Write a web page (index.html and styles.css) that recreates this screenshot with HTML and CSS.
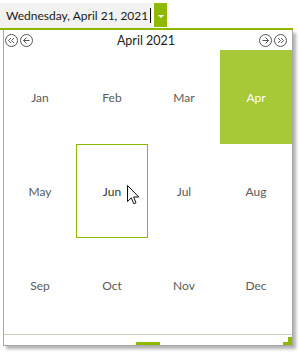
FILE: index.html
```html
<!DOCTYPE html>
<html lang="en">
<head>
  <meta charset="UTF-8">
  <title>Date Picker</title>
  <link rel="stylesheet" href="styles.css">
</head>
<body>

  <div class="picker">
    <div class="field">
      <span class="value">Wednesday, April 21, 2021</span>
      <span class="caret"></span>
    </div>
    <div class="drop"><span class="arrow"></span></div>
  </div>
  <div class="topline"></div>

  <div class="popup">
    <div class="header">
      <div class="nav">
        <svg width="13" height="13" viewBox="0 0 13 13">
          <circle cx="6.5" cy="6.5" r="6" fill="none" stroke="#555" />
          <path d="M6 4 L3.5 6.5 L6 9 M9 4 L6.5 6.5 L9 9" fill="none" stroke="#555" />
        </svg>
        <svg width="13" height="13" viewBox="0 0 13 13">
          <circle cx="6.5" cy="6.5" r="6" fill="none" stroke="#555" />
          <path d="M6.5 3.5 L3.5 6.5 L6.5 9.5 M3.5 6.5 L9.5 6.5" fill="none" stroke="#555" />
        </svg>
      </div>
      <div class="title">April 2021</div>
      <div class="nav">
        <svg width="13" height="13" viewBox="0 0 13 13">
          <circle cx="6.5" cy="6.5" r="6" fill="none" stroke="#555" />
          <path d="M6.5 3.5 L9.5 6.5 L6.5 9.5 M3.5 6.5 L9.5 6.5" fill="none" stroke="#555" />
        </svg>
        <svg width="13" height="13" viewBox="0 0 13 13">
          <circle cx="6.5" cy="6.5" r="6" fill="none" stroke="#555" />
          <path d="M4 4 L6.5 6.5 L4 9 M7 4 L9.5 6.5 L7 9" fill="none" stroke="#555" />
        </svg>
      </div>
    </div>

    <div class="months">
      <div class="month">Jan</div>
      <div class="month">Feb</div>
      <div class="month">Mar</div>
      <div class="month selected">Apr</div>
      <div class="month">May</div>
      <div class="month hover">Jun</div>
      <div class="month">Jul</div>
      <div class="month">Aug</div>
      <div class="month">Sep</div>
      <div class="month">Oct</div>
      <div class="month">Nov</div>
      <div class="month">Dec</div>
    </div>

    <div class="footer">
      <div class="thumb"></div>
      <svg class="grip" width="9" height="8" viewBox="0 0 9 8">
        <polygon points="5,0 9,0 9,8 0,8 0,5 5,5" fill="#8cb800" />
      </svg>
    </div>
  </div>

  <!-- mouse pointer over the Jun cell -->
  <svg class="pointer" width="13" height="20" viewBox="0 0 13 20">
    <path d="M0.5 0.5 L0.5 16.5 L4.3 12.8 L6.8 18.8 L9 17.8 L6.6 12 L11.8 12 Z" fill="#fff" stroke="#111" stroke-linejoin="round" />
  </svg>

</body>
</html>
```

FILE: styles.css
```css
body {
  margin: 0;
  width: 299px;
  height: 354px;
  background-color: #fff;
  font-family: Lato, "Noto Sans", sans-serif;
  position: relative;
  overflow: hidden;
}
.picker {
  display: flex;
  height: 25px;
  margin-top: 3px;
}
.field {
  width: 152px;
  flex-shrink: 0;
  box-sizing: border-box;
  padding-left: 6px;
  display: flex;
  align-items: center;
  background-color: #f2f3f0;
  font-size: 12px;
  color: #1a1a1a;
  white-space: nowrap;
  overflow: hidden;
}
.caret {
  width: 1px;
  height: 15px;
  margin-left: 2px;
  background-color: #000;
}
.drop {
  width: 13px;
  height: 24px;
  margin-left: 2px;
  background-color: #8dba00;
  display: flex;
  align-items: center;
  justify-content: center;
}
.arrow {
  border-left: 3px solid transparent;
  border-right: 3px solid transparent;
  border-top: 3px solid #fff;
  margin-top: 2px;
}
.topline {
  width: 293px;
  height: 2px;
  background-color: #8cb800;
}
.popup {
  margin-left: 3px;
  width: 290px;
  box-sizing: border-box;
  border-left: 1px solid #a8a8a8;
  border-right: 1px solid #a8a8a8;
  border-bottom: 1px solid #a8a8a8;
  box-shadow: 3px 3px 3px rgba(0, 0, 0, 0.3);
}
.header {
  height: 20px;
  display: flex;
  align-items: center;
  justify-content: space-between;
  padding: 0 5px 0 1px;
}
.nav {
  display: flex;
  gap: 2px;
}
.nav svg {
  display: block;
}
.title {
  font-size: 12.5px;
  color: #222;
}
.months {
  display: grid;
  grid-template-columns: repeat(4, 72px);
  grid-template-rows: repeat(3, 94px);
}
.month {
  display: flex;
  align-items: center;
  justify-content: center;
  font-size: 12px;
  color: #5a5a5a;
}
.month.selected {
  background-color: #a7c837;
  color: #fff;
}
.month.hover {
  border: 1px solid #8cb800;
  color: #333;
}
.footer {
  position: relative;
  height: 10px;
  margin-top: 2px;
  border-top: 1px solid #cbcbbd;
  display: flex;
  align-items: flex-end;
  justify-content: center;
}
.thumb {
  width: 24px;
  height: 3px;
  background-color: #8cb800;
}
.grip {
  position: absolute;
  right: 0;
  bottom: 0;
  display: block;
}
.pointer {
  position: absolute;
  left: 127px;
  top: 185px;
}
```
